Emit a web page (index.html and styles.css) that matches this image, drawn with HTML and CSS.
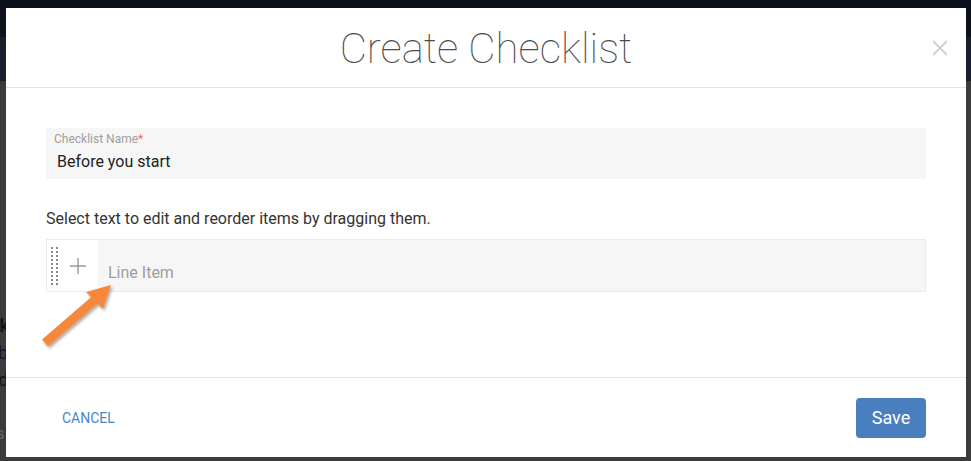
FILE: index.html
```html
<!DOCTYPE html>
<html>
<head>
<meta charset="utf-8">
<link rel="stylesheet" href="styles.css">
</head>
<body>
<div class="page">
  <div class="topbar"></div>
  <div class="subbar"></div>
  <div class="content">
    <p class="bg-line bold">Kk</p>
    <p class="bg-line blue">bb</p>
    <p class="bg-line">dd</p>
    <p class="bg-line bold">II</p>
    <p class="bg-line gray">ss</p>
  </div>
</div>

<div class="modal">
  <header class="modal-header">
    <h1 class="modal-title">Create Checklist</h1>
    <button class="close-btn" aria-label="Close">
      <svg width="16" height="16" viewBox="0 0 16 16"><path d="M1 1L15 15M15 1L1 15" stroke="#d0d0d0" stroke-width="1.8" fill="none"/></svg>
    </button>
  </header>
  <section class="modal-body">
    <div class="name-field">
      <label class="name-label">Checklist Name<span class="req">*</span></label>
      <div class="name-value">Before you start</div>
    </div>
    <p class="hint">Select text to edit and reorder items by dragging them.</p>
    <div class="line-row">
      <div class="line-tools">
        <div class="handle">
          <span></span><span></span><span></span><span></span><span></span><span></span><span></span><span></span><span></span><span></span>
          <span></span><span></span><span></span><span></span><span></span><span></span><span></span><span></span><span></span><span></span>
        </div>
        <svg class="plus" width="16" height="16" viewBox="0 0 16 16"><path d="M8 0V16M0 8H16" stroke="#9a9a9a" stroke-width="1.4" fill="none"/></svg>
      </div>
      <div class="line-input">Line Item</div>
    </div>
  </section>
  <footer class="modal-footer">
    <button class="cancel-btn">CANCEL</button>
    <button class="save-btn">Save</button>
  </footer>
  <svg class="arrow" width="90" height="80" viewBox="0 0 90 80">
    <defs>
      <filter id="sh" x="-20%" y="-20%" width="140%" height="140%">
        <feDropShadow dx="1.5" dy="2" stdDeviation="1.5" flood-color="#000" flood-opacity="0.35"/>
      </filter>
    </defs>
    <g filter="url(#sh)">
      <path d="M7 68 L58 24" stroke="#f5883b" stroke-width="9" stroke-linecap="butt" fill="none"/>
      <path d="M73 10 L48 17 L65 34 Z" fill="#f5883b"/>
    </g>
  </svg>
</div>
</body>
</html>
```

FILE: styles.css
```css
* { box-sizing: border-box; }
html, body { margin: 0; padding: 0; }
body {
  width: 971px;
  height: 461px;
  overflow: hidden;
  background: #3b3b3b;
  font-family: Roboto, "Liberation Sans", sans-serif;
  position: relative;
}
.page { display: flex; flex-direction: column; }
.topbar { height: 37px; background: #0b121b; }
.subbar { height: 44px; background: #16202d; }
.content { padding: 236px 0 0 0; margin-left: -12px; }
.bg-line {
  margin: 0 0 9px 0;
  font-size: 18px;
  line-height: 18px;
  color: #151515;
}
.bg-line.bold { font-weight: 700; }
.bg-line.blue { color: #0f1a2a; }
.bg-line.gray { color: #6a6a6a; font-size: 16px; }

.modal {
  position: absolute;
  left: 6px;
  top: 8px;
  width: 960px;
  height: 449px;
  background: #fff;
  display: flex;
  flex-direction: column;
}
.modal-header {
  height: 80px;
  border-bottom: 1px solid #e2e2e2;
  display: flex;
  align-items: center;
  justify-content: center;
  position: relative;
}
.modal-title {
  margin: 0;
  font-weight: 100;
  font-size: 42px;
  color: #4a4a4a;
  letter-spacing: 0;
  padding-top: 2px;
}
.close-btn {
  position: absolute;
  right: 18px;
  top: 32px;
  width: 16px;
  height: 16px;
  padding: 0;
  border: 0;
  background: none;
  display: block;
}
.close-btn svg { display: block; }

.modal-body {
  height: 289px;
  padding: 40px 40px 0 40px;
  display: flex;
  flex-direction: column;
}
.name-field {
  height: 51px;
  background: #f6f6f6;
  padding: 4px 8px 0 8px;
  display: flex;
  flex-direction: column;
}
.name-label {
  font-size: 12px;
  line-height: 14px;
  color: #9e9e9e;
}
.req { color: #e57373; }
.name-value {
  margin-top: 6px;
  padding-left: 3px;
  font-size: 16px;
  line-height: 20px;
  color: #222;
}
.hint {
  margin: 30px 0 0 0;
  font-size: 16px;
  line-height: 20px;
  color: #333;
}
.line-row {
  margin-top: 10px;
  height: 53px;
  border: 1px solid #ebebeb;
  display: flex;
}
.line-tools {
  width: 51px;
  background: #fff;
  display: flex;
  align-items: center;
  padding-left: 4px;
}
.handle {
  width: 8px;
  height: 40px;
  display: grid;
  grid-template-columns: 2px 2px;
  grid-auto-rows: 2px;
  column-gap: 3px;
  row-gap: 2px;
  align-content: center;
}
.handle span { background: #888; width: 2px; height: 2px; }
.plus { margin-left: 11px; display: block; }
.line-input {
  flex: 1;
  background: #f6f6f6;
  padding: 24px 0 0 10px;
  font-size: 16px;
  line-height: 18px;
  color: #9e9e9e;
}

.modal-footer {
  flex: 1;
  border-top: 1px solid #e2e2e2;
  display: flex;
  align-items: center;
  justify-content: space-between;
  padding: 0 40px 0 40px;
}
.cancel-btn {
  border: 0;
  background: none;
  font-family: Roboto, "Liberation Sans", sans-serif;
  font-size: 14px;
  color: #4a86c8;
  padding: 0 0 0 16px;
  letter-spacing: 0;
}
.save-btn {
  width: 70px;
  height: 40px;
  border: 0;
  border-radius: 4px;
  background: #4a7fbf;
  color: #fff;
  font-family: Roboto, "Liberation Sans", sans-serif;
  font-size: 18px;
  padding: 0;
}
.arrow {
  position: absolute;
  left: 32px;
  top: 267px;
}
```
